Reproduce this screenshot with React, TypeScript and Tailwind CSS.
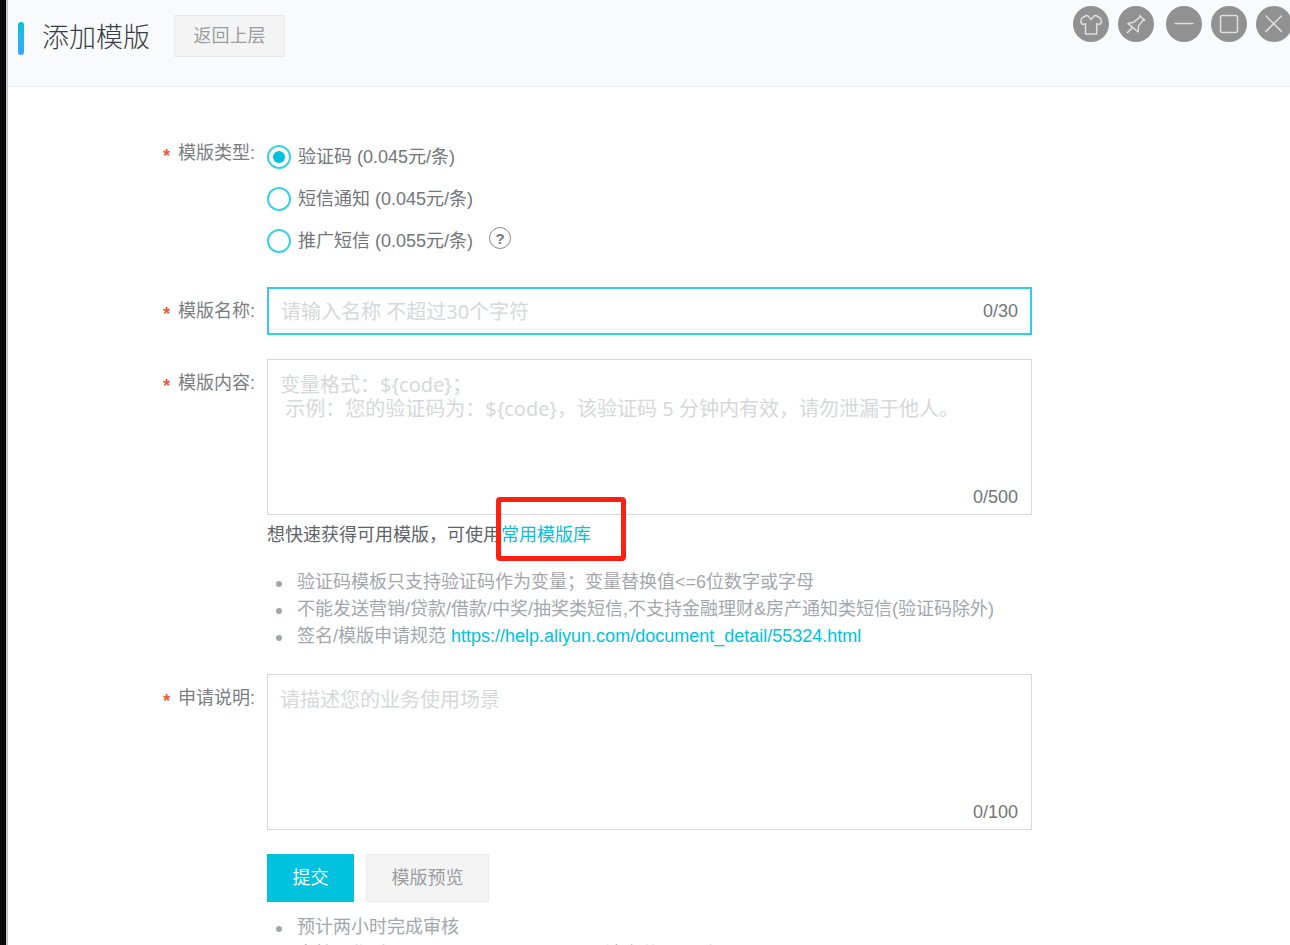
import { useState } from "react"
import type { ReactNode } from "react"

const templateTypes = [
  { value: "code", label: "验证码 (0.045元/条)" },
  { value: "notice", label: "短信通知 (0.045元/条)" },
  { value: "promotion", label: "推广短信 (0.055元/条)", help: true },
]

const boxClass = "block w-full resize-none bg-white px-3 outline-none placeholder:text-[#d6d8da] font-['Noto_Sans','Noto_Sans_CJK_SC',sans-serif] text-[20px]"

function Label({ htmlFor, id, children, className }: { htmlFor?: string; id?: string; children: ReactNode; className?: string }) {
  const content = (
    <>
      <span className="align-[-3px] font-['Liberation_Mono',monospace] text-[18px] leading-none font-bold text-[#f0583c]">*</span>
      <span className="ml-1.5">{children}:</span>
    </>
  )
  const classes = `w-[247px] shrink-0 text-right leading-7 text-[#7b7d81] ${className ?? ""}`
  if (htmlFor) {
    return (
      <label htmlFor={htmlFor} className={classes}>
        {content}
      </label>
    )
  }
  return (
    <div id={id} className={classes}>
      {content}
    </div>
  )
}

function WindowButton({ title, children }: { title: string; children: ReactNode }) {
  return (
    <button type="button" aria-label={title} className="flex size-9 items-center justify-center rounded-full bg-[#919191] text-[#dedede]">
      <svg width="36" height="36" viewBox="0 0 36 36" fill="none" stroke="currentColor" strokeWidth="1.5" strokeLinejoin="round" strokeLinecap="round">
        {children}
      </svg>
    </button>
  )
}

function WindowControls() {
  return (
    <div className="-mr-0.5 flex gap-3 pt-1.5">
      <div className="flex gap-[9px]">
        <WindowButton title="换肤">
          <path d="M13.2 9.5 8.6 12.4 7.8 16.4 9.6 18.5 12.5 17.8V28H23.7V17.8L26.6 18.5 28.4 16.4 27.6 12.4 23 9.5 21.3 9.8 18.1 13.4 14.9 9.8Z" />
        </WindowButton>
        <WindowButton title="置顶">
          <path d="M21.7 9.7 26.7 14.4 24.7 14.6 20.6 19.8 20.2 26 9.9 17.4 15.7 16.2 21.3 11.6ZM14.8 21.4 9.3 26.6" />
        </WindowButton>
      </div>
      <div className="flex gap-[9px]">
        <WindowButton title="最小化">
          <path d="M9.3 17.5H26.8" />
        </WindowButton>
        <WindowButton title="最大化">
          <rect x="9.5" y="9.5" width="17" height="17" rx="2" />
        </WindowButton>
        <WindowButton title="关闭">
          <path d="M10 10 25.4 25.4M25.4 10 10 25.4" />
        </WindowButton>
      </div>
    </div>
  )
}

function BulletList({ items }: { items: ReactNode[] }) {
  return (
    <ul className="leading-[27px] text-[#a3a7ab]">
      {items.map((item, i) => (
        <li key={i} className="flex gap-[15px] pl-[9px]">
          <span className="mt-3 size-1.5 shrink-0 rounded-full bg-[#a3a7ab]" />
          <span>{item}</span>
        </li>
      ))}
    </ul>
  )
}

const contentTips = [
  "验证码模板只支持验证码作为变量；变量替换值<=6位数字或字母",
  "不能发送营销/贷款/借款/中奖/抽奖类短信,不支持金融理财&房产通知类短信(验证码除外)",
  <>
    签名/模版申请规范{" "}
    <a href="https://help.aliyun.com/document_detail/55324.html" className="text-[#00c1de]">
      https://help.aliyun.com/document_detail/55324.html
    </a>
  </>,
]

const submitTips = ["预计两小时完成审核", "审核工作时间：周一至周日9:00-23:00(法定节日顺延)"]

export default function App() {
  const [type, setType] = useState("code")
  const [name, setName] = useState("")
  const [content, setContent] = useState("")
  const [remark, setRemark] = useState("")

  return (
    <div className="h-screen overflow-hidden border-l-[6px] border-[#0b0b0b] bg-white font-['Liberation_Sans','Noto_Sans_CJK_SC',sans-serif] text-[18px] text-[#737579]">
      <div className="min-h-full border-l-2 border-[#c8c8c8]">
        <header className="flex items-start justify-between border-b border-[#ebecec] bg-[#f9fafc] pb-[29px] pl-[10px]">
          <div className="flex items-center pt-[15px]">
            <span className="mt-1 h-[33px] w-1.5 rounded-full bg-linear-to-b from-[#00c1de] to-[#38a7ff]" />
            <h1 className="ml-[18px] pt-1 text-[27px] leading-[38px] font-light text-[#373d41]">添加模版</h1>
            <button type="button" className="ml-6 h-[42px] w-[111px] border border-[#e9eaea] bg-[#f4f4f4] text-[#9b9ea0]">
              返回上层
            </button>
          </div>
          <WindowControls />
        </header>

        <form className="pt-[49px] pr-6" onSubmit={(e) => e.preventDefault()}>
          <div className="flex gap-3">
            <Label id="type-label" className="pt-[3px]">
              模版类型
            </Label>
            <div role="radiogroup" aria-labelledby="type-label">
              {templateTypes.map((item) => (
                <div key={item.value} className="flex h-[42px] items-center">
                  <label className="flex items-center gap-[7px]">
                    <input
                      type="radio"
                      name="type"
                      value={item.value}
                      checked={type === item.value}
                      onChange={() => setType(item.value)}
                      className="size-6 appearance-none rounded-full border-2 border-[#3dd0e6] bg-clip-content p-1 checked:bg-[#00c1de]"
                    />
                    {item.label}
                  </label>
                  {item.help && (
                    <button type="button" aria-label="说明" className="mb-1.5 ml-4 flex size-[22px] items-center justify-center rounded-full border border-[#85878a] text-[15px] leading-none font-bold">
                      ?
                    </button>
                  )}
                </div>
              ))}
            </div>
          </div>

          <div className="mt-[25px] flex gap-3">
            <Label htmlFor="name" className="pt-2.5">
              模版名称
            </Label>
            <div className="relative max-w-[765px] flex-1">
              <input
                id="name"
                maxLength={30}
                value={name}
                onChange={(e) => setName(e.target.value)}
                placeholder="请输入名称 不超过30个字符"
                className={`${boxClass} h-12 border-2 border-[#33cce3]`}
              />
              <span className="absolute right-3.5 bottom-2.5 leading-7">{name.length}/30</span>
            </div>
          </div>

          <div className="mt-6 flex gap-3">
            <Label htmlFor="content" className="pt-2.5">
              模版内容
            </Label>
            <div className="max-w-[765px] flex-1">
              <div className="relative">
                <textarea
                  id="content"
                  maxLength={500}
                  value={content}
                  onChange={(e) => setContent(e.target.value)}
                  placeholder={"变量格式：${code}；\n 示例：您的验证码为：${code}，该验证码 5 分钟内有效，请勿泄漏于他人。"}
                  className={`${boxClass} h-[156px] border border-[#d8d9da] pt-[13px] leading-6`}
                />
                <span className="absolute right-3.5 bottom-1 leading-7">{content.length}/500</span>
              </div>
              <p className="mt-[7px] leading-[27px] text-[#5f6368]">
                想快速获得可用模版，可使用
                <span className="relative">
                  <a href="#templates" className="text-[#00c1de]">
                    常用模版库
                  </a>
                  <span className="pointer-events-none absolute -top-7 -left-[5px] h-16 w-[130px] rounded border-[5px] border-[#ff2012]" />
                </span>
              </p>
              <div className="mt-5">
                <BulletList items={contentTips} />
              </div>
            </div>
          </div>

          <div className="mt-6 flex gap-3">
            <Label htmlFor="remark" className="pt-2.5">
              申请说明
            </Label>
            <div className="max-w-[765px] flex-1">
              <div className="relative">
                <textarea
                  id="remark"
                  maxLength={100}
                  value={remark}
                  onChange={(e) => setRemark(e.target.value)}
                  placeholder="请描述您的业务使用场景"
                  className={`${boxClass} h-[156px] border border-[#d8d9da] pt-[13px] leading-6`}
                />
                <span className="absolute right-3.5 bottom-1 leading-7">{remark.length}/100</span>
              </div>
              <div className="mt-6 mb-3 flex gap-3">
                <button type="submit" className="h-12 w-[87px] bg-[#00c1de] text-white">
                  提交
                </button>
                <button type="button" className="h-12 w-[123px] border border-[#e9eaea] bg-[#f4f4f4] text-[#9b9ea0]">
                  模版预览
                </button>
              </div>
              <BulletList items={submitTips} />
            </div>
          </div>
        </form>
      </div>
    </div>
  )
}
